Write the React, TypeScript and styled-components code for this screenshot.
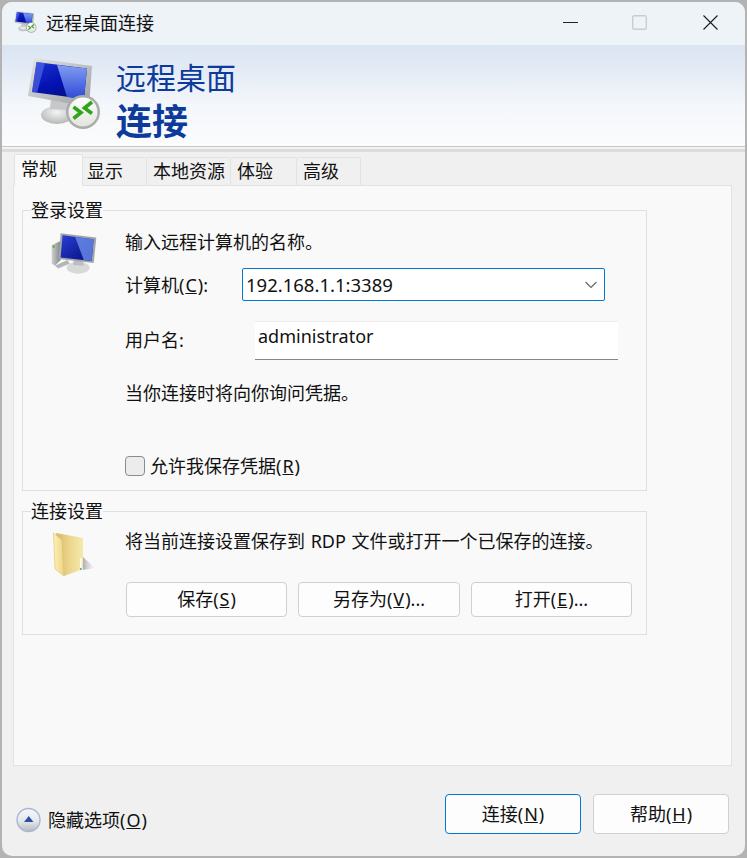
import React from 'react';
import styled, { createGlobalStyle } from 'styled-components';

const GlobalStyle = createGlobalStyle`
  html, body {
    margin: 0;
    padding: 0;
    background: #b3b3b3;
  }
  body {
    font-family: "Noto Sans", "Noto Sans CJK SC", sans-serif;
    font-size: 18px;
    color: #111;
  }
  u {
    padding: 0 1px;
  }
`;

const Page = styled.div`
  width: 747px;
  height: 858px;
  padding: 2px;
  box-sizing: border-box;
  overflow: hidden;
`;

const Window = styled.div`
  width: 743px;
  height: 854px;
  display: flex;
  flex-direction: column;
  background: #f0f0f0;
  border-radius: 10px;
  overflow: hidden;
`;

const TitleBar = styled.div`
  height: 43px;
  flex: none;
  box-sizing: border-box;
  display: flex;
  align-items: center;
  padding: 0 0 2px 11px;
  background: #eef3f8;
`;

const TitleIcon = styled.div`
  display: flex;
  margin-bottom: 2px;
`;

const TitleText = styled.div`
  margin-left: 7px;
  line-height: 24px;
`;

const WindowButtons = styled.div`
  margin-left: auto;
  display: flex;
  align-items: center;
  padding-right: 27px;
`;

const WindowButton = styled.div<{ $gap: number }>`
  display: flex;
  margin-left: ${p => p.$gap}px;
`;

const Banner = styled.div`
  height: 101px;
  flex: none;
  display: flex;
  align-items: flex-start;
  padding-left: 22px;
  box-sizing: border-box;
  background: linear-gradient(#dae5f2 0%, #e3eaf5 22%, #f4f7fb 60%, #fbfcfd 100%);
`;

const BannerIconBox = styled.div`
  margin-top: 7px;
  flex: none;
  display: flex;
`;

const BannerText = styled.div`
  margin-left: 8px;
  padding-top: 13px;
  color: #0d3b9c;
`;

const BannerLine = styled.div`
  font-size: 30px;
  line-height: 40px;
`;

const BannerStrong = styled.div`
  font-size: 36px;
  line-height: 48px;
  font-weight: 700;
`;

const BannerRule = styled.div`
  height: 6px;
  flex: none;
  box-sizing: border-box;
  background: #dcdcdc;
  border-top: 1px solid #c6c6c6;
  box-shadow: inset 0 1px 0 #f6f6f6, inset 0 2px 0 #f0f0f0;
`;

const Body = styled.div`
  flex: 1;
  display: flex;
  flex-direction: column;
  padding: 0 13px 0 11px;
`;

const TabStrip = styled.div`
  height: 34px;
  margin-bottom: -1px;
  padding-left: 1px;
  display: flex;
  align-items: flex-end;
  position: relative;
  z-index: 1;
`;

const Tab = styled.div<{ $width: number; $pad: number; $active?: boolean }>`
  width: ${p => p.$width}px;
  height: ${p => (p.$active ? 32 : 29)}px;
  box-sizing: border-box;
  flex: none;
  padding-left: ${p => p.$pad}px;
  line-height: ${p => (p.$active ? 28 : 26)}px;
  background: ${p => (p.$active ? '#f9f9f9' : '#f0f0f0')};
  border: 1px solid #e2e2e2;
  border-left-width: ${p => (p.$active ? 1 : 0)}px;
  border-bottom-color: ${p => (p.$active ? '#f9f9f9' : '#e2e2e2')};
  border-top-left-radius: 2px;
  border-top-right-radius: 2px;
`;

const Panel = styled.div`
  height: 581px;
  box-sizing: border-box;
  padding: 12px 0 0 8px;
  background: #f9f9f9;
  border: 1px solid #e2e2e2;
`;

const Group = styled.fieldset<{ $height: number }>`
  width: 625px;
  height: ${p => p.$height}px;
  box-sizing: border-box;
  margin: 0 0 8px;
  padding: 0;
  display: grid;
  grid-template-columns: 102px 1fr;
  border: 1px solid #dfdfdf;
  min-width: 0;
`;

const GroupLegend = styled.legend`
  margin-left: 8px;
  padding: 0;
  line-height: 24px;
  background: #f9f9f9;
`;

const IconCell = styled.div<{ $left: number; $top: number }>`
  padding: ${p => p.$top}px 0 0 ${p => p.$left}px;
`;

const Column = styled.div`
  display: flex;
  flex-direction: column;
  align-items: flex-start;
  padding-right: 14px;
`;

const Line = styled.div<{ $top: number }>`
  margin-top: ${p => p.$top}px;
  line-height: 24px;
  white-space: nowrap;
  word-spacing: 1px;
`;

const FieldRow = styled.div<{ $top: number }>`
  margin-top: ${p => p.$top}px;
  display: flex;
  align-items: center;
  line-height: 24px;
`;

const FieldLabel = styled.div<{ $width: number; $lift?: number }>`
  width: ${p => p.$width}px;
  flex: none;
  white-space: nowrap;
  padding-bottom: ${p => p.$lift ?? 0}px;
`;

const Combo = styled.div`
  width: 363px;
  height: 33px;
  box-sizing: border-box;
  display: flex;
  align-items: center;
  justify-content: space-between;
  padding: 0 7px 0 3px;
  background: #fff;
  border: 1px solid #0078d4;
  border-radius: 2px;
  font-size: 18.5px;
`;

const TextInput = styled.div`
  width: 363px;
  height: 39px;
  box-sizing: border-box;
  padding: 1px 3px 0;
  line-height: 26px;
  background: #fff;
  border-top: 1px solid #ededed;
  border-bottom: 1px solid #868686;
`;

const CheckRow = styled.div`
  margin-top: 49px;
  display: flex;
  align-items: center;
  gap: 5px;
  line-height: 24px;
`;

const CheckBox = styled.div`
  width: 20px;
  height: 20px;
  box-sizing: border-box;
  background: #ececec;
  border: 1px solid #8b8b8b;
  border-radius: 4px;
`;

const ButtonRow = styled.div`
  margin-top: 29px;
  margin-left: 1px;
  display: flex;
  gap: 11px;
`;

const Button = styled.button<{ $width: number; $height: number; $primary?: boolean }>`
  width: ${p => p.$width}px;
  height: ${p => p.$height}px;
  padding: 0 0 ${p => (p.$height < 40 ? 4 : 2)}px;
  font: inherit;
  color: inherit;
  background: #fdfdfd;
  border: 1px solid ${p => (p.$primary ? '#0078d4' : '#d0d0d0')};
  border-radius: 4px;
`;

const Footer = styled.div`
  flex: 1;
  display: flex;
  align-items: flex-start;
  padding-top: 28px;
`;

const Expander = styled.div`
  display: flex;
  align-items: center;
  gap: 7px;
  margin: 13px 0 0 3px;
  line-height: 26px;
`;

const FooterButtons = styled.div`
  margin-left: auto;
  margin-right: 3px;
  display: flex;
  gap: 12px;
`;

const RemoteMonitor: React.FC<{ size: number; id: string }> = ({ size, id }) => (
  <svg width={size} height={size} viewBox="0 0 84 84">
    <defs>
      <linearGradient id={`${id}-screen`} x1="0" y1="0" x2="0.6" y2="1">
        <stop offset="0" stopColor="#1c34d0" />
        <stop offset="0.6" stopColor="#0411b4" />
        <stop offset="1" stopColor="#06107e" />
      </linearGradient>
      <linearGradient id={`${id}-shine`} x1="0" y1="0" x2="0" y2="1">
        <stop offset="0" stopColor="#7f9df0" />
        <stop offset="1" stopColor="#2f48d8" />
      </linearGradient>
      <linearGradient id={`${id}-frame`} x1="0" y1="0" x2="1" y2="1">
        <stop offset="0" stopColor="#e4e5e6" />
        <stop offset="1" stopColor="#9b9ea0" />
      </linearGradient>
      <linearGradient id={`${id}-badge`} x1="0" y1="0" x2="0" y2="1">
        <stop offset="0" stopColor="#fefefe" />
        <stop offset="1" stopColor="#e2e4dc" />
      </linearGradient>
      <radialGradient id={`${id}-base`} cx="0.5" cy="0.35" r="0.7">
        <stop offset="0" stopColor="#f4f4f4" />
        <stop offset="1" stopColor="#b0b2b2" />
      </radialGradient>
    </defs>
    <ellipse cx="33" cy="63" rx="16" ry="9" fill={`url(#${id}-base)`} />
    <path d="M27 46 L44 48 L45 58 L26 57 Z" fill="#c6c8c9" />
    <path d="M10 6 L68 14 L65 55 L4 44 Z" fill={`url(#${id}-frame)`} />
    <path d="M12.5 10 L63 16.5 L60 47 L8 40 Z" fill={`url(#${id}-screen)`} />
    <path d="M33 13 L63 16.5 L60 47 L43 45 Z" fill={`url(#${id}-shine)`} />
    <path d="M12.5 10 L21 11 L13 40.7 L8 40 Z" fill="#5a70e8" opacity="0.6" />
    <circle cx="59" cy="60" r="17" fill="#a9aca9" />
    <circle cx="59" cy="60" r="14.5" fill={`url(#${id}-badge)`} />
    <path d="M49.5 55 L57 60.5 L49.5 66.5" fill="none" stroke="#2fa51c" strokeWidth="3.6" />
    <path d="M68 50 L60.5 56 L68 61.5" fill="none" stroke="#2fa51c" strokeWidth="3.6" />
  </svg>
);

const ComputerIcon: React.FC = () => (
  <svg width="48" height="43" viewBox="120 110 145 130">
    <defs>
      <linearGradient id="pc-screen" x1="0" y1="0" x2="1" y2="1">
        <stop offset="0" stopColor="#2a3ed6" />
        <stop offset="1" stopColor="#040b78" />
      </linearGradient>
      <linearGradient id="pc-tower" x1="0" y1="0" x2="1" y2="0">
        <stop offset="0" stopColor="#cfd2d2" />
        <stop offset="1" stopColor="#808486" />
      </linearGradient>
    </defs>
    <path d="M125 150 L150 138 L152 195 L135 212 L125 205 Z" fill="url(#pc-tower)" />
    <rect x="128" y="150" width="6" height="8" fill="#57b548" />
    <path d="M135 212 L172 195 L180 205 L145 220 Z" fill="#b4b7b8" />
    <ellipse cx="205" cy="218" rx="35" ry="18" fill="#d8dada" />
    <path d="M192 190 L220 194 L222 212 L190 210 Z" fill="#bcbfc0" />
    <path d="M152 114 L260 127 L252 204 L146 192 Z" fill="#a2a6a9" />
    <path d="M158 120 L252 132 L246 198 L152 187 Z" fill="url(#pc-screen)" />
    <path d="M196 125 L252 132 L246 198 L222 195 Z" fill="#6c8fe8" opacity="0.8" />
  </svg>
);

const FolderIcon: React.FC = () => (
  <svg width="60" height="60" viewBox="0 0 60 60">
    <defs>
      <linearGradient id="folder-back" x1="0" y1="0" x2="1" y2="0">
        <stop offset="0" stopColor="#d6b868" />
        <stop offset="0.5" stopColor="#ecd68c" />
        <stop offset="1" stopColor="#f6e9ae" />
      </linearGradient>
      <linearGradient id="folder-front" x1="0" y1="0" x2="1" y2="0">
        <stop offset="0" stopColor="#fdf2b6" />
        <stop offset="1" stopColor="#edd484" />
      </linearGradient>
      <linearGradient id="folder-shadow" x1="0" y1="0" x2="1" y2="0">
        <stop offset="0" stopColor="#8f8f8f" stopOpacity="0.7" />
        <stop offset="1" stopColor="#bdbdbd" stopOpacity="0" />
      </linearGradient>
    </defs>
    <path d="M39 29 L51 40 L39 42 Z" fill="url(#folder-shadow)" />
    <path d="M12 5 L39 10 L39 41 L20 48 Z" fill="url(#folder-back)" />
    <path d="M9.5 5 L18 12 L20 48 L11 41 Z" fill="url(#folder-front)" stroke="#dcc071" strokeWidth="0.6" />
    <rect x="36" y="30" width="1.5" height="10" fill="#fdfdf4" />
    <rect x="36" y="40" width="1.5" height="2" fill="#4f9fe0" />
  </svg>
);

const ExpandIcon: React.FC = () => (
  <svg width="25" height="26" viewBox="0 0 25 26">
    <defs>
      <linearGradient id="expand-fill" x1="0" y1="0" x2="0" y2="1">
        <stop offset="0" stopColor="#f6f8fb" />
        <stop offset="0.55" stopColor="#e4e8ec" />
        <stop offset="1" stopColor="#b4bab8" />
      </linearGradient>
    </defs>
    <circle cx="12.5" cy="13" r="11.5" fill="url(#expand-fill)" stroke="#a9b6d8" strokeWidth="1.4" />
    <path d="M8 15 L12.7 9 L17.5 15 Z" fill="#2f4fa6" />
  </svg>
);

const Minimize = () => (
  <svg width="15" height="15" viewBox="0 0 15 15">
    <path d="M0 7.5 H15" stroke="#222" strokeWidth="1" />
  </svg>
);

const Maximize = () => (
  <svg width="15" height="15" viewBox="0 0 15 15">
    <rect x="0.7" y="0.7" width="13.6" height="13.6" rx="1.5" fill="none" stroke="#c9ccd0" strokeWidth="1.4" />
  </svg>
);

const Close = () => (
  <svg width="15" height="15" viewBox="0 0 15 15">
    <path d="M0.5 0.5 L14.5 14.5 M14.5 0.5 L0.5 14.5" stroke="#1c1c1c" strokeWidth="1.1" />
  </svg>
);

const Chevron = () => (
  <svg width="12" height="8" viewBox="0 0 12 8">
    <path d="M0.5 1 L6 6.5 L11.5 1" fill="none" stroke="#666" strokeWidth="1.2" />
  </svg>
);

const tabs = [
  { label: '常规', width: 69, pad: 6, active: true },
  { label: '显示', width: 64, pad: 4 },
  { label: '本地资源', width: 84, pad: 6 },
  { label: '体验', width: 66, pad: 6 },
  { label: '高级', width: 64, pad: 6 },
];

const App: React.FC = () => {
  return (
    <Page>
      <GlobalStyle />
      <Window>
        <TitleBar>
          <TitleIcon>
            <RemoteMonitor size={26} id="title" />
          </TitleIcon>
          <TitleText>远程桌面连接</TitleText>
          <WindowButtons>
            <WindowButton $gap={0}>
              <Minimize />
            </WindowButton>
            <WindowButton $gap={54}>
              <Maximize />
            </WindowButton>
            <WindowButton $gap={56}>
              <Close />
            </WindowButton>
          </WindowButtons>
        </TitleBar>
        <Banner>
          <BannerIconBox>
            <RemoteMonitor size={84} id="banner" />
          </BannerIconBox>
          <BannerText>
            <BannerLine>远程桌面</BannerLine>
            <BannerStrong>连接</BannerStrong>
          </BannerText>
        </Banner>
        <BannerRule />
        <Body>
          <TabStrip>
            {tabs.map(tab => (
              <Tab key={tab.label} $width={tab.width} $pad={tab.pad} $active={tab.active}>
                {tab.label}
              </Tab>
            ))}
          </TabStrip>
          <Panel>
            <Group $height={293}>
              <GroupLegend>登录设置</GroupLegend>
              <IconCell $left={27} $top={10}>
                <ComputerIcon />
              </IconCell>
              <Column>
                <Line $top={8}>输入远程计算机的名称。</Line>
                <FieldRow $top={14}>
                  <FieldLabel $width={117}>
                    计算机(<u>C</u>):
                  </FieldLabel>
                  <Combo>
                    192.168.1.1:3389
                    <Chevron />
                  </Combo>
                </FieldRow>
                <FieldRow $top={20}>
                  <FieldLabel $width={130} $lift={2}>
                    用户名:
                  </FieldLabel>
                  <TextInput>administrator</TextInput>
                </FieldRow>
                <Line $top={21}>当你连接时将向你询问凭据。</Line>
                <CheckRow>
                  <CheckBox />
                  <span>
                    允许我保存凭据(<u>R</u>)
                  </span>
                </CheckRow>
              </Column>
            </Group>
            <Group $height={136}>
              <GroupLegend>连接设置</GroupLegend>
              <IconCell $left={21} $top={5}>
                <FolderIcon />
              </IconCell>
              <Column>
                <Line $top={6}>将当前连接设置保存到 RDP 文件或打开一个已保存的连接。</Line>
                <ButtonRow>
                  <Button $width={161} $height={35}>
                    保存(<u>S</u>)
                  </Button>
                  <Button $width={162} $height={35}>
                    另存为(<u>V</u>)...
                  </Button>
                  <Button $width={161} $height={35}>
                    打开(<u>E</u>)...
                  </Button>
                </ButtonRow>
              </Column>
            </Group>
          </Panel>
          <Footer>
            <Expander>
              <ExpandIcon />
              <span>
                隐藏选项(<u>O</u>)
              </span>
            </Expander>
            <FooterButtons>
              <Button $width={136} $height={40} $primary>
                连接(<u>N</u>)
              </Button>
              <Button $width={136} $height={40}>
                帮助(<u>H</u>)
              </Button>
            </FooterButtons>
          </Footer>
        </Body>
      </Window>
    </Page>
  );
};

export default App;
